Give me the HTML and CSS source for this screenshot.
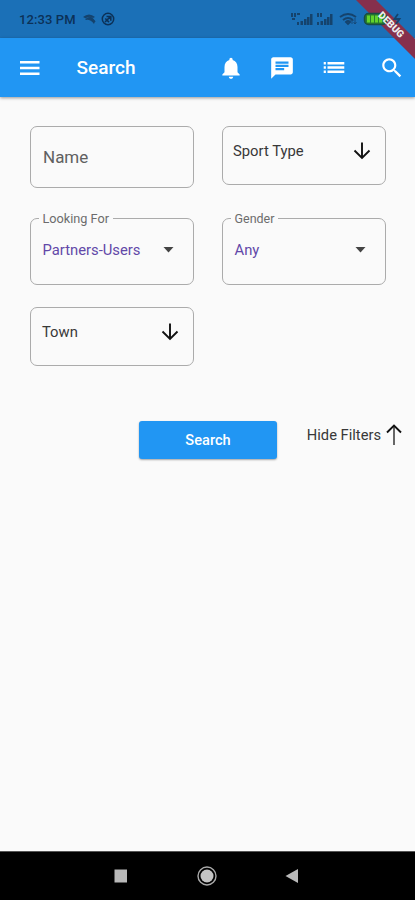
FILE: index.html
```html
<!DOCTYPE html>
<html lang="en">
<head>
<meta charset="utf-8">
<title>Search</title>
<link rel="stylesheet" href="styles.css">
</head>
<body>
<div class="screen">
  <div class="status">
    <span class="time">12:33 PM</span>
    <svg class="status-left" width="36" height="18" viewBox="0 0 36 18">
      <path d="M1 7Q7 2 13 7L11 8Q7 5 3 8ZM3 9Q8 5 13 11L12 14Q8 9 4 10Z" fill="#15436d"/>
      <path d="M3 7.500Q8 5 13 12" fill="none" stroke="#15436d" stroke-width="1.500"/>
      <circle cx="26" cy="9" r="5.700" fill="none" stroke="#0c3157" stroke-width="1.500"/>
      <path d="M23 12l5-5M24.500 6.500h4.300v4.300M23.300 8.500l3.700 3.600" fill="none" stroke="#0c3157" stroke-width="1.600"/>
    </svg>
    <svg class="status-right" width="74" height="24" viewBox="0 0 74 24">
      <g fill="#15436d">
        <path d="M1 6h2v4H1zM4 6h2v4H4zM7 6h3v2H7zM2 11h3v2H2zM7 15h2v3H7zM10.500 14h2.500v4h-2.500zM14 12h2.500v6H14zM17 10h2.500v8H17zM20 7h2.500v11H20z"/>
        <path d="M27 6h2v4h-2zM30 6h2v4h-2zM27 15h2v3h-2zM30.500 14H33v4h-2.500zM34 12h2.500v6H34zM37 10h2.500v8H37zM40 7h2.500v11H40z"/>
      </g>
      <path d="M50 10q8-6 16 0M53 13q5-4 10 0M56 15q2-2 4 0l-2 2z" fill="none" stroke="#15436d" stroke-width="1.900"/>
      <path d="M62 17v-5m-1.500 2l1.500-2 1.500 2M65 11v6m-1.500-2l1.500 2 1.500-2" fill="none" stroke="#15436d" stroke-width=".8"/>
    </svg>
  </div>
  <header class="appbar">
    <svg class="menu" width="20" height="14" viewBox="0 0 20 14"><path d="M0 1.300h19.500M0 7h19.500M0 12.700h19.500" stroke="#fff" stroke-width="2.400"/></svg>
    <h1>Search</h1>
    <nav class="actions">
      <svg width="26" height="26" viewBox="0 0 24 24"><path fill="#fff" d="M12 22c1.100 0 2-.9 2-2h-4c0 1.100.9 2 2 2zm6-6v-5c0-3.070-1.640-5.640-4.500-6.320V4c0-.83-.67-1.500-1.500-1.500s-1.500.67-1.500 1.500v.68C7.630 5.360 6 7.920 6 11v5l-2 2v1h16v-1l-2-2z"/></svg>
      <svg width="26" height="26" viewBox="0 0 24 24"><path fill="#fff" d="M20 2H4c-1.100 0-1.990.9-1.990 2L2 22l4-4h14c1.100 0 2-.9 2-2V4c0-1.100-.9-2-2-2zM6 9h12v2H6V9zm8 5H6v-2h8v2zm4-6H6V6h12v2z"/></svg>
      <svg width="26" height="26" viewBox="0 0 24 24"><path fill="#fff" d="M2.500 6.400h2v2.300h-2zM2.500 10.400h2v2.300h-2zM2.500 14.400h2v2.300h-2zM6 6.400h15.500v2.300H6zM6 10.400h15.500v2.300H6zM6 14.400h15.500v2.300H6z"/></svg>
      <svg width="26" height="26" viewBox="0 0 24 24"><path fill="#fff" d="M15.500 14h-.79l-.28-.27C15.410 12.590 16 11.110 16 9.500 16 5.910 13.090 3 9.500 3S3 5.910 3 9.500 5.910 16 9.500 16c1.610 0 3.090-.59 4.230-1.570l.27.28v.79l5 4.990L20.490 19l-4.990-5zm-6 0C7.010 14 5 11.990 5 9.500S7.010 5 9.500 5 14 7.010 14 9.500 11.990 14 9.500 14z"/></svg>
    </nav>
  </header>
  <main>
    <div class="filters">
      <div class="field name">Name</div>
      <div class="field picker">
        <span>Sport Type</span>
        <svg width="18" height="20" viewBox="0 0 18 20"><path d="M9 1.500v15M1.500 9.500L9 17l7.500-7.500" fill="none" stroke="#111" stroke-width="1.900"/></svg>
      </div>
      <fieldset class="select">
        <legend>Looking For</legend>
        <div class="value"><span>Partners-Users</span><svg width="11" height="6" viewBox="0 0 11 6"><path d="M.5 0h10l-5 5.500z" fill="#444"/></svg></div>
      </fieldset>
      <fieldset class="select gender">
        <legend>Gender</legend>
        <div class="value"><span>Any</span><svg width="11" height="6" viewBox="0 0 11 6"><path d="M.5 0h10l-5 5.500z" fill="#444"/></svg></div>
      </fieldset>
      <div class="field picker town">
        <span>Town</span>
        <svg width="18" height="20" viewBox="0 0 18 20"><path d="M9 1.500v15M1.500 9.500L9 17l7.500-7.500" fill="none" stroke="#111" stroke-width="1.900"/></svg>
      </div>
    </div>
    <div class="submit-row">
      <button class="submit">Search</button>
      <div class="hide"><span>Hide Filters</span><svg width="16" height="22" viewBox="0 0 16 22"><path d="M8 2v19" fill="none" stroke="#666" stroke-width="2"/><path d="M1 8.500l7-7 7 7" fill="none" stroke="#111" stroke-width="1.900"/></svg></div>
    </div>
  </main>
  <footer class="navbar">
    <svg width="14" height="14" viewBox="0 0 14 14"><path d="M.5.500h12.500v13H.5z" fill="#b9b9b9"/></svg>
    <svg width="20" height="20" viewBox="0 0 20 20"><circle cx="10" cy="10" r="9" fill="none" stroke="#aaa" stroke-width="1.400"/><circle cx="10" cy="10" r="6.500" fill="#c4c4c4"/></svg>
    <svg width="14" height="16" viewBox="0 0 14 16"><path d="M13 1v14L.5 8z" fill="#b9b9b9"/></svg>
  </footer>
  <div class="banner">
    <svg width="65" height="65" viewBox="0 0 65 65">
      <path d="M6 0h20l39 39v20z" fill="#86304c"/>
      <rect x="14.500" y="13.500" width="22" height="11" rx="4" fill="#287d2d" stroke="#184d45" stroke-width="1.500"/>
      <path d="M18.500 15.500v7M22.500 15.500v7M26.500 15.500v7M30.500 15.500v7" stroke="#62d32c" stroke-width="3"/>
      <path d="M48 14l-3.500 5h5L46 24" fill="none" stroke="#15436d" stroke-width="1.800"/>
    </svg>
    <span>DEBUG</span>
  </div>
</div>
</body>
</html>
```
FILE: styles.css
```css
* { box-sizing: border-box; }
body { margin: 0; font-family: Roboto, sans-serif; background: #fafafa; }
svg { display: block; flex: none; }
.screen { position: relative; width: 415px; height: 900px; display: flex; flex-direction: column; overflow: hidden; }
.status { height: 37.500px; background: #1b70b7; display: flex; align-items: center; padding-left: 19px; }
.time { width: 63px; font-size: 13px; font-weight: 500; line-height: 18px; color: #0c3157; white-space: nowrap; padding-top: 2px; letter-spacing: .1px; }
.status-left { margin-top: 1px; }
.status-right { margin-left: 172px; }
.appbar { height: 59px; background: #2196f3; display: flex; align-items: center; padding: 1px 10px 0 20px; box-shadow: 0 1px 3px rgba(0,0,0,.4); }
.menu { margin-right: 36.500px; }
.appbar h1 { margin: 0; width: 141px; font-size: 19px; font-weight: 500; line-height: 24px; color: #fff; }
.actions { display: flex; gap: 25.500px; }
.actions svg:last-child { margin-left: 7px; }
main { flex: 1; }
.filters { padding: 29.500px 29px 0 30px; display: grid; grid-template-columns: 164px 164px; column-gap: 28px; grid-template-rows: 85px 96px 59px; align-items: start; }
.field { border: 1px solid #ababab; border-radius: 7px; }
.name { height: 62px; padding: 0 12px; display: flex; align-items: center; font-size: 17px; color: #606060; }
.picker { height: 59px; padding: 14px 14px 0 10px; display: flex; justify-content: space-between; align-items: flex-start; font-size: 14.800px; line-height: 20px; color: #383838; }
.select { margin: 0; min-width: 0; height: 74px; border: 1px solid #ababab; border-radius: 7px; padding: 0 19px 0 11.500px; }
.select legend { margin-left: -4px; padding: 0 4px; font-size: 12.700px; line-height: 15px; color: #6c6c6c; }
.gender legend { font-size: 12.500px; }
.value { display: flex; justify-content: space-between; align-items: center; padding-top: 14px; font-size: 14.800px; line-height: 20px; color: #6248a8; }
.town { padding-left: 11px; }
.submit-row { display: flex; align-items: flex-start; padding: 55px 13px 0 139px; justify-content: space-between; }
.submit { width: 138px; height: 38px; padding: 0; border: 0; border-radius: 3px; background: #2196f3; color: #fff; font: 500 14.600px/38px Roboto, sans-serif; box-shadow: 0 1px 2px rgba(0,0,0,.35); }
.hide { display: flex; gap: 5px; padding-top: 3px; font-size: 14.700px; line-height: 23px; color: #383838; white-space: nowrap; }
.navbar { height: 49px; background: #000; border-top: 1px solid #555; display: flex; align-items: center; justify-content: space-between; padding: 0 116px 0 114px; }
.banner { position: absolute; top: 0; right: 0; }
.banner span { position: absolute; left: 21px; top: 18px; width: 40px; text-align: center; font-size: 10px; line-height: 14px; font-weight: 900; color: #eee; transform: rotate(45deg); }
```
